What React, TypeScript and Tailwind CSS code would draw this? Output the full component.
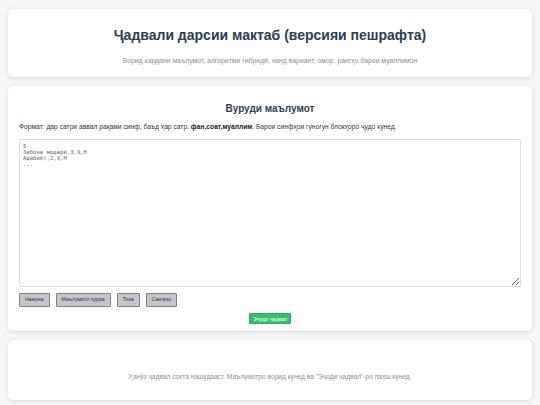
export default function App() {
  const btn = "h-[14px] px-[5px] text-[5.2px] text-[#333] bg-[#c3c7cc] border border-[#7d8186] rounded-[1px]";
  return (
    <div className="min-h-[405px] bg-[#f5f6f7] px-[8px] pt-[9px] pb-[8px] flex flex-col gap-[9px]" style={{ fontFamily: '"Liberation Sans", Arial, sans-serif' }}>
      <div className="bg-white rounded-[5px] shadow-[0_1px_4px_rgba(0,0,0,0.12)] h-[68px] flex flex-col items-center">
        <h1 className="mt-[18px] text-[14px] leading-[17px] font-bold text-[#2c3e50]">Ҷадвали дарсии мактаб (версияи пешрафта)</h1>
        <p className="mt-[12px] text-[6.85px] leading-[9px] text-[#8a9099]">Ворид кардани маълумот, алгоритми гибридӣ, чанд вариант, омор, рангҳо барои муаллимон</p>
      </div>
      <div className="bg-white rounded-[5px] shadow-[0_1px_4px_rgba(0,0,0,0.12)] h-[245px] px-[11px] flex flex-col">
        <h2 className="mt-[17px] text-center text-[10px] leading-[12px] font-bold text-[#2c3e50]">Вуруди маълумот</h2>
        <p className="mt-[7px] text-[6.7px] leading-[9px] text-[#333]">
          Формат: дар сатри аввал рақами синф, баъд ҳар сатр: <b className="text-[#222]">фан,соат,муаллим</b>. Барои синфҳои гуногун блокҳоро ҷудо кунед.
        </p>
        <textarea
          className="mt-[8px] w-full h-[148px] border border-[#ddd] rounded-[2px] px-[3px] pt-[3px] text-[5.6px] leading-[6px] text-[#666] resize-y outline-none"
          style={{ fontFamily: '"DejaVu Sans Mono", monospace' }}
          defaultValue={"5\nЗабони модарӣ,3,Ҳ.Н\nАдабиёт,2,Ҳ.Н\n..."}
        />
        <div className="mt-[6px] flex gap-[6px]">
          <button className={btn}>Намуна</button>
          <button className={btn}>Маълумоти пурра</button>
          <button className={btn}>Тоза</button>
          <button className={btn}>Санҷиш</button>
        </div>
        <div className="mt-[6px] flex justify-center">
          <button className="h-[11px] px-[3px] text-[5.2px] leading-[8px] text-white bg-[#34c06e] border border-[#2aa85e] rounded-[1px]">Эҷоди ҷадвал</button>
        </div>
      </div>
      <div className="bg-white rounded-[5px] shadow-[0_1px_4px_rgba(0,0,0,0.12)] flex-1 min-h-[60px] flex justify-center">
        <p className="mt-[32px] text-[6.6px] leading-[9px] text-[#8a9099]">Ҳанӯз ҷадвал сохта нашудааст. Маълумотро ворид кунед ва "Эҷоди ҷадвал"-ро пахш кунед.</p>
      </div>
    </div>
  );
}
